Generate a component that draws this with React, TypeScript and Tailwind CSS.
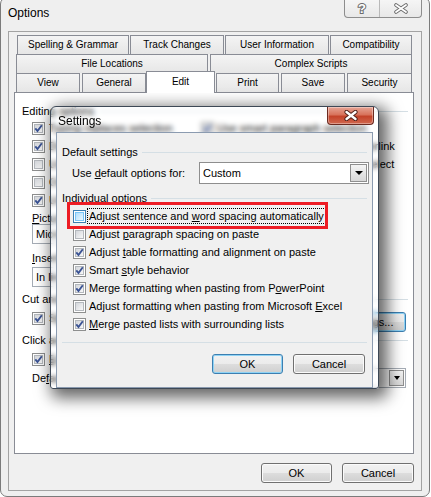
import type { ReactNode } from "react";

function CheckBox({ checked = false, hot = false }: { checked?: boolean; hot?: boolean }) {
  return (
    <span
      className={`relative flex h-[13px] w-[13px] shrink-0 items-center justify-center border bg-white ${
        hot ? "border-[#3c7fb1]" : "border-[#8e8f8f]"
      }`}
    >
      <span
        className={`h-[9px] w-[9px] border ${
          hot
            ? "border-[#79c6f9] bg-[linear-gradient(135deg,#b1dffd,#e9f7fe)]"
            : "border-[#b4b8bd] bg-[linear-gradient(135deg,#d3d6db,#f8f8f8)]"
        }`}
      />
      {checked && (
        <svg className="absolute left-0 top-0" width="11" height="11" viewBox="0 0 11 11">
          <path d="M2.3 5.3 L4.5 8 L8.8 2.3" fill="none" stroke="#3b5394" strokeWidth="1.9" />
        </svg>
      )}
    </span>
  );
}

function Combo({ value, className = "" }: { value: string; className?: string }) {
  return (
    <div className={`flex h-[20px] items-center border border-[#a5acb5] bg-white pl-[3px] pr-px ${className}`}>
      <span className="flex-1 overflow-hidden whitespace-nowrap">{value}</span>
      <span className="flex h-[16px] w-[15px] items-center justify-center border border-[#8f8f8f] bg-[linear-gradient(#f4f4f4,#dadada)]">
        <span className="h-0 w-0 border-x-[3.5px] border-t-[4px] border-x-transparent border-t-black" />
      </span>
    </div>
  );
}

function Button({ children, def = false, className = "" }: { children: ReactNode; def?: boolean; className?: string }) {
  return (
    <div
      className={`flex h-[20px] items-center justify-center rounded-[3px] border bg-[linear-gradient(#f2f2f2,#ebebeb_50%,#dddddd_51%,#cfcfcf)] text-[11px] ${
        def
          ? "border-[#3c7fb1] shadow-[inset_0_0_0_1px_#8fd3f5]"
          : "border-[#707070] shadow-[inset_0_0_0_1px_#fbfbfb]"
      } ${className}`}
    >
      {children}
    </div>
  );
}

function Group({ label }: { label: string }) {
  return (
    <div className="flex h-[12px] items-center gap-[4px] leading-[12px]">
      <span className="whitespace-nowrap">{label}</span>
      <div className="h-px flex-1 bg-[#d5dfe5]" />
    </div>
  );
}

const TAB = "flex h-[19px] shrink-0 items-center justify-center border border-b-0 border-[#898c95] bg-[linear-gradient(#f4f4f4,#e6e6e6)] text-[10px] leading-none";

const LEFT_OPTS = [
  { label: "Typing replaces selection", on: true },
  { label: "Drag-and-drop text editing", on: true },
  { label: "Use the INS key for paste", on: false },
  { label: "Overtype mode", on: false },
  { label: "Use smart cursoring", on: true },
];

const RIGHT_OPTS = [
  { label: "Use smart paragraph selection", on: true },
  { label: "Use CTRL + Click to follow hyperlink", on: true },
  { label: "When selecting, automatically select", on: true },
  { label: "Prompt to update style", on: false },
  { label: "Keep track of formatting", on: false },
];

const SETTINGS_OPTS: { label: ReactNode; on: boolean; focus?: boolean }[] = [
  { label: <>Adjust sentence and <u>w</u>ord spacing automatically</>, on: false, focus: true },
  { label: <>Adjust <u>p</u>aragraph spacing on paste</>, on: false },
  { label: <>Adjust <u>t</u>able formatting and alignment on paste</>, on: true },
  { label: <>Smart <u>s</u>tyle behavior</>, on: true },
  { label: <>Merge formatting when pasting from P<u>o</u>werPoint</>, on: true },
  { label: <>Adjust formatting when pasting from Microsoft <u>E</u>xcel</>, on: false },
  { label: <><u>M</u>erge pasted lists with surrounding lists</>, on: true },
];

function EditPanel() {
  return (
    <div className="relative h-[362px] border border-[#898c95] bg-white text-[11px]">
      <div className="flex flex-col pl-[7px] pr-[5px] pt-[12px]">
        <Group label="Editing options" />
        <div className="ml-[10px] mt-[2px] grid grid-cols-[169px_1fr]">
          <div className="flex flex-col">
            {LEFT_OPTS.map((o) => (
              <div key={o.label} className="flex h-[18px] items-center gap-[4px] whitespace-nowrap">
                <CheckBox checked={o.on} />
                <span>{o.label}</span>
              </div>
            ))}
          </div>
          <div className="flex flex-col">
            {RIGHT_OPTS.map((o) => (
              <div key={o.label} className="flex h-[18px] items-center gap-[3px] whitespace-nowrap">
                <CheckBox checked={o.on} />
                <span>{o.label}</span>
              </div>
            ))}
          </div>
        </div>

        <div className="ml-[10px] mt-[3px] h-[12px] leading-[12px]">
          <u>P</u>icture editor:
        </div>
        <Combo value="Microsoft Office Word" className="ml-[10px] w-[190px]" />
        <div className="ml-[10px] mt-[8px] h-[12px] leading-[12px]">
          <u>I</u>nsert/paste pictures as:
        </div>
        <Combo value="In line with text" className="ml-[10px] mt-[3px] w-[190px]" />

        <div className="mt-[6px]">
          <Group label="Cut and paste options" />
        </div>
        <div className="ml-[10px] mr-[2px] mt-[7px] flex h-[20px] items-start">
          <CheckBox checked />
          <span className="ml-[4px] leading-[13px]">
            S<u>h</u>ow Paste Options buttons
          </span>
          <Button def className="ml-auto w-[74px]">
            Se<u>t</u>tings...
          </Button>
        </div>

        <div className="mt-[2px]">
          <Group label="Click and type" />
        </div>
        <div className="ml-[10px] mt-[7px] flex h-[13px] items-center gap-[4px]">
          <CheckBox checked />
          <span>
            <u>E</u>nable click and type
          </span>
        </div>
        <div className="ml-[10px] mr-[2px] mt-[2px] flex h-[20px] items-center">
          <span>
            De<u>f</u>ault paragraph style:
          </span>
          <Combo value="Normal" className="ml-auto w-[190px]" />
        </div>
      </div>
    </div>
  );
}

function SettingsDialog() {
  return (
    <div className="absolute left-[50px] top-[106px] flex h-[283px] w-[329px] flex-col rounded-t-[6px] rounded-b-[3px] border border-[#3d4856] bg-[linear-gradient(#bcd4ed,#cde0f3_40%,#d4e6f6)]/95 shadow-[5px_5px_16px_4px_rgba(0,0,0,0.6)] backdrop-blur-[2.5px]">
      <div className="flex h-[25px] items-start justify-between pl-[7px] pr-[4px]">
        <span className="pt-[7px] text-[12px] leading-[14px] text-black">Settings</span>
        <div className="flex h-[18px] w-[47px] items-center justify-center rounded-b-[4px] border border-t-0 border-[#6b2a20] bg-[linear-gradient(#e6a595,#d8735c_45%,#c4432a_55%,#d0684f)] shadow-[inset_0_0_0_1px_rgba(255,255,255,0.35)]">
          <svg width="14" height="11" viewBox="0 0 14 11">
            <path d="M2.5 2 L11.5 9 M11.5 2 L2.5 9" stroke="#4d1f18" strokeWidth="4.2" strokeLinecap="round" />
            <path d="M2.5 2 L11.5 9 M11.5 2 L2.5 9" stroke="#ffffff" strokeWidth="2.4" strokeLinecap="round" />
          </svg>
        </div>
      </div>
      <div className="mx-[5px] flex flex-1 flex-col border border-[#8b9bb0] bg-[#f0f0f0] text-[11px] text-black">
        <div className="px-[5px] pt-[13px]">
          <Group label="Default settings" />
        </div>
        <div className="mt-[4px] flex h-[22px] items-center pl-[15px] pr-[3px]">
          <span>
            Use <u>d</u>efault options for:
          </span>
          <div className="ml-auto flex h-[22px] w-[170px] items-center border border-[#8e8e8e] bg-white pl-[3px] pr-px">
            <span className="flex-1">Custom</span>
            <span className="flex h-[18px] w-[17px] items-center justify-center border border-[#8f8f8f] bg-[linear-gradient(#f4f4f4,#d8d8d8)]">
              <span className="h-0 w-0 border-x-[4px] border-t-[4px] border-x-transparent border-t-black" />
            </span>
          </div>
        </div>
        <div className="mt-[8px] px-[5px]">
          <Group label="Individual options" />
        </div>
        <div className="mt-[3px] flex flex-col pl-[16px]">
          {SETTINGS_OPTS.map((o, i) => (
            <div key={i} className="flex h-[18px] items-center whitespace-nowrap">
              <CheckBox checked={o.on} hot={o.focus} />
              <span
                className={`ml-px border px-px leading-[14px] ${
                  o.focus ? "border-dotted border-black" : "border-transparent"
                }`}
              >
                {o.label}
              </span>
            </div>
          ))}
        </div>
        <div className="mx-[5px] mt-[9px] h-px bg-[#d5dfe5]" />
        <div className="mt-[11px] flex justify-end gap-[10px] pr-[7px]">
          <Button def className="w-[71px]">
            OK
          </Button>
          <Button className="w-[72px]">Cancel</Button>
        </div>
      </div>
    </div>
  );
}

export default function App() {
  return (
    <div className="relative h-[497px] w-[431px] overflow-hidden bg-white font-['Liberation_Sans',Arial,sans-serif] text-black">
      <div className="-mt-[3px] flex h-[500px] w-[430px] flex-col rounded-[7px] border border-[#7b7b7b] bg-[#efefef] px-[7px] pb-[5px]">
        {/* title bar */}
        <div className="flex h-[33px] items-start justify-between">
          <span className="pt-[8px] text-[12px] leading-[14px]">Options</span>
          <div className="flex h-[20px] rounded-b-[4px] border border-t-0 border-[#8d8d8d] bg-[linear-gradient(#f7f7f7,#e8e8e8)]">
            <div className="flex w-[35px] items-center justify-center border-r border-[#b9b9b9] pt-[2px] text-[13px] font-bold leading-none text-white [-webkit-text-stroke:2px_#6c6c6c] [paint-order:stroke_fill]">
              ?
            </div>
            <div className="flex w-[41px] items-center justify-center pt-[2px]">
              <svg width="16" height="11" viewBox="0 0 16 11">
                <path d="M3 2 L13 9 M13 2 L3 9" stroke="#6c6c6c" strokeWidth="3.6" strokeLinecap="round" />
                <path d="M3 2 L13 9 M13 2 L3 9" stroke="#ffffff" strokeWidth="1.8" strokeLinecap="round" />
              </svg>
            </div>
          </div>
        </div>

        {/* client area */}
        <div className="flex h-[460px] flex-col border border-[#a3a3a3] bg-[#f0f0f0] pl-[5px] pr-[7px] pt-[3px]">
          <div className="flex pl-[3px] gap-px">
            <div className={`${TAB} w-[112px]`}>Spelling &amp; Grammar</div>
            <div className={`${TAB} w-[94px]`}>Track Changes</div>
            <div className={`${TAB} w-[104px]`}>User Information</div>
            <div className={`${TAB} w-[82px]`}>Compatibility</div>
          </div>
          <div className="flex pl-[2px] gap-[2px]">
            <div className={`${TAB} w-[192px]`}>File Locations</div>
            <div className={`${TAB} w-[202px]`}>Complex Scripts</div>
          </div>
          <div className="flex h-[19px] pl-[2px]">
            <div className={`${TAB} w-[64px]`}>View</div>
            <div className={`${TAB} ml-[2px] w-[64px]`}>General</div>
            <div className="relative z-10 -mt-[2px] flex h-[22px] w-[69px] shrink-0 items-center justify-center border border-b-0 border-[#898c95] bg-white pb-[2px] text-[10px] leading-none">
              Edit
            </div>
            <div className={`${TAB} ml-px w-[63px]`}>Print</div>
            <div className={`${TAB} ml-[2px] w-[64px]`}>Save</div>
            <div className={`${TAB} ml-[2px] w-[65px]`}>Security</div>
          </div>
          <EditPanel />
          <div className="mt-[9px] flex justify-end gap-[10px]">
            <Button className="w-[71px]">OK</Button>
            <Button className="w-[72px]">Cancel</Button>
          </div>
        </div>
      </div>

      <SettingsDialog />

      {/* red highlight drawn over the screenshot */}
      <div className="absolute left-[67px] top-[202px] h-[27px] w-[261px] border-[3px] border-[#ed1c24]" />
    </div>
  );
}
